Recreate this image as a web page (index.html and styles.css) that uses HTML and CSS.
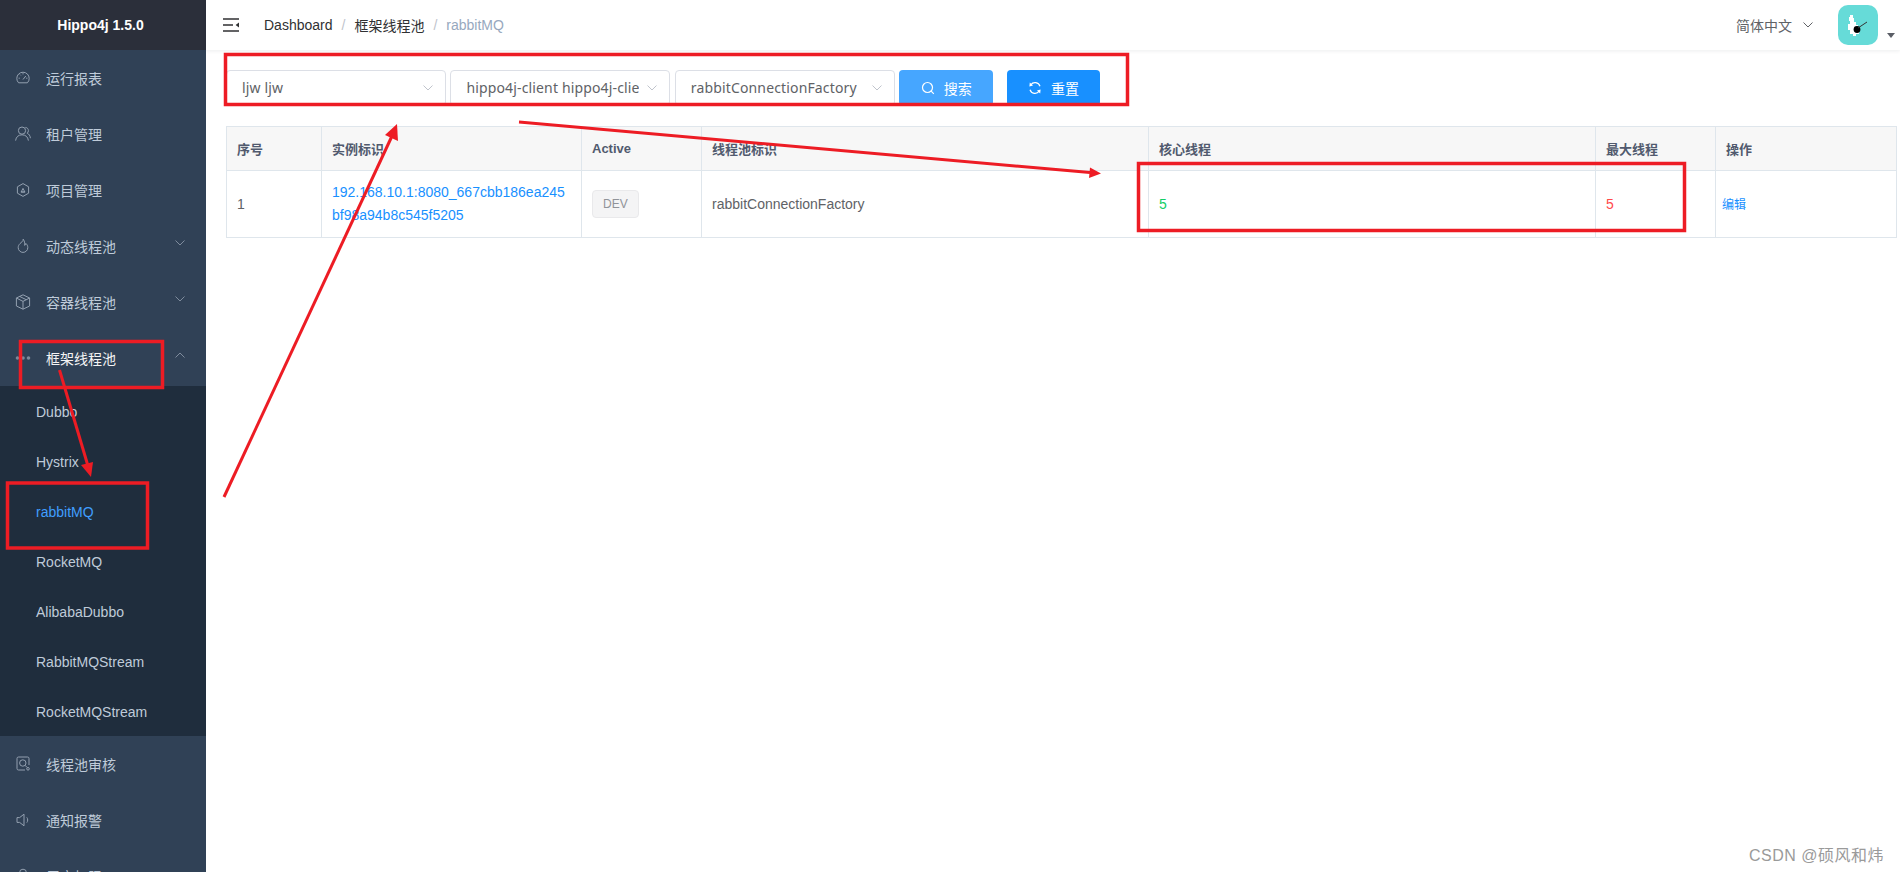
FILE: index.html
```html
<!DOCTYPE html>
<html>
  <head>
    <title>Hippo4j 1.5.0</title>
    <link rel="stylesheet" href="styles.css">
  </head>
  <body>
    <div class="app">
      <aside class="sidebar">
        <div class="logo">Hippo4j 1.5.0</div>
        <ul class="menu">
          <li class="menu-item">
            <svg class="menu-icon" viewBox="0 0 16 16"><path d="M3.6 12.8A6.2 6.2 0 1 1 12.4 12.8Z"/><path d="M8 9.5 10.8 6M3.6 8.2H4.8M5 4.6l.8.8M8 3.2v1.2M11.2 8.2h1.2"/></svg>
            <span>运行报表</span>
          </li>
          <li class="menu-item">
            <svg class="menu-icon" viewBox="0 0 16 16"><circle cx="7" cy="4.6" r="3.6"/><path d="M.6 14.6C1 10.8 3.6 8.8 7 8.8s6 2 6.4 5.8M10.4 1.4c2 .2 3 1.6 3 3.2 0 1-.4 2-1.2 2.6 1.8.8 3 2.6 3.2 5"/></svg>
            <span>租户管理</span>
          </li>
          <li class="menu-item">
            <svg class="menu-icon" viewBox="0 0 16 16"><path d="M8 1.6 13.6 4.8V11.2L8 14.4 2.4 11.2V4.8Z"/><path d="M6.2 10 8 6.4 9.8 10ZM5.8 10h4.4"/></svg>
            <span>项目管理</span>
          </li>
          <li class="menu-item">
            <svg class="menu-icon" viewBox="0 0 16 16"><path d="M8.2 1.2C8.4 3.4 6.4 4 5 5.6 3.8 6.9 3.2 8 3.2 9.6a4.8 4.8 0 0 0 9.6 0c0-1.8-.8-3.2-2-4.2-.1 1-.5 1.6-1.1 2C9.8 5.2 9.6 3 8.2 1.2Z"/></svg>
            <span>动态线程池</span>
            <svg class="menu-arrow" viewBox="0 0 10 6"><path d="M.5.5 5 5 9.500.5"/></svg>
          </li>
          <li class="menu-item">
            <svg class="menu-icon" viewBox="0 0 16 16"><path d="M8 .8 14.600 4V12L8 15.200 1.400 12V4Z"/><path d="M1.400 4 8 7.400 14.600 4M8 7.400V15.200M4.600 2.400 11.200 5.700"/></svg>
            <span>容器线程池</span>
            <svg class="menu-arrow" viewBox="0 0 10 6"><path d="M.5.5 5 5 9.500.5"/></svg>
          </li>
          <li class="menu-item open">
            <svg class="menu-icon" viewBox="0 0 16 16"><circle class="dot" cx="2.500" cy="8" r="1.800"/><circle class="dot" cx="8" cy="8" r="1.800"/><circle class="dot" cx="13.500" cy="8" r="1.800"/></svg>
            <span>框架线程池</span>
            <svg class="menu-arrow" viewBox="0 0 10 6"><path d="M.5 5.500 5 1 9.500 5.500"/></svg>
          </li>
          <li>
            <ul class="submenu">
              <li>Dubbo</li>
              <li>Hystrix</li>
              <li class="active">rabbitMQ</li>
              <li>RocketMQ</li>
              <li>AlibabaDubbo</li>
              <li>RabbitMQStream</li>
              <li>RocketMQStream</li>
            </ul>
          </li>
          <li class="menu-item">
            <svg class="menu-icon" viewBox="0 0 16 16"><path d="M10 14H3.500A1.500 1.500 0 0 1 2 12.500V2.500A1.500 1.500 0 0 1 3.500 1H12.500A1.500 1.500 0 0 1 14 2.500V9"/><circle cx="7.800" cy="7" r="3.200"/><path d="M10.200 9.400 12 11.400"/><circle cx="13" cy="12.800" r="1.300"/></svg>
            <span>线程池审核</span>
          </li>
          <li class="menu-item">
            <svg class="menu-icon" viewBox="0 0 16 16"><path d="M2 5.600V10.400H4.600L9 13.800V2.200L4.600 5.600ZM11.800 5.400c1.200 1.400 1.200 3.800 0 5.200"/></svg>
            <span>通知报警</span>
          </li>
          <li class="menu-item">
            <svg class="menu-icon" viewBox="0 0 16 16"><circle cx="8" cy="4.600" r="3.400"/><path d="M2 14.600C2.400 11 4.800 9 8 9s5.600 2 6 5.600"/></svg>
            <span>用户权限</span>
          </li>
        </ul>
      </aside>

      <div class="main">
        <header class="navbar">
          <svg class="hamburger" viewBox="0 0 16 14"><path d="M0 1H16M0 7H10M0 13H16"/><path class="fill" d="M16 4.400V9.600L12.600 7Z"/></svg>
          <div class="breadcrumb">
            <span>Dashboard</span>
            <i>/</i>
            <span>框架线程池</span>
            <i>/</i>
            <span class="current">rabbitMQ</span>
          </div>
          <div class="nav-right">
            <div class="lang">
              <span>简体中文</span>
              <svg class="lang-arrow" viewBox="0 0 10 6"><path d="M.5.5 5 5 9.500.5"/></svg>
            </div>
            <div class="avatar">
              <svg viewBox="0 0 40 40"><path class="bird" d="M12 10H15V13H16V17H18V20H20V26H21V29H18V31H15V29H12V25H10V19H12V16H11V12H12Z"/><circle cx="19" cy="24.500" r="3.400"/><path class="stick" d="M20 23 29 17"/></svg>
            </div>
            <span class="caret"></span>
          </div>
        </header>

        <section class="content">
          <div class="filters">
            <div class="select"><span class="select-text">ljw ljw</span><svg viewBox="0 0 10 6"><path d="M.5.5 5 5 9.500.5"/></svg></div>
            <div class="select"><span class="select-text">hippo4j-client hippo4j-client</span><svg viewBox="0 0 10 6"><path d="M.5.5 5 5 9.500.5"/></svg></div>
            <div class="select"><span class="select-text">rabbitConnectionFactory</span><svg viewBox="0 0 10 6"><path d="M.5.5 5 5 9.500.5"/></svg></div>
            <button class="btn btn-search">
              <svg viewBox="0 0 14 14"><circle cx="6.500" cy="6.500" r="5"/><path d="M10.200 10.200 12.800 12.800"/></svg>
              <span>搜索</span>
            </button>
            <button class="btn btn-reset">
              <svg viewBox="0 0 14 14"><path d="M12 5.200A5.200 5.200 0 0 0 2.800 3.800M2 8.800A5.200 5.200 0 0 0 11.200 10.200"/><path class="fill" d="M1.800 1.600 5 4.600 1.400 5.400ZM12.200 12.400 9 9.400 12.600 8.600Z"/></svg>
              <span>重置</span>
            </button>
          </div>

          <table class="pool-table">
            <colgroup>
              <col class="col-no">
              <col class="col-instance">
              <col class="col-active">
              <col class="col-pool">
              <col class="col-core">
              <col class="col-max">
              <col class="col-op">
            </colgroup>
            <thead>
              <tr>
                <th>序号</th>
                <th>实例标识</th>
                <th>Active</th>
                <th>线程池标识</th>
                <th>核心线程</th>
                <th>最大线程</th>
                <th>操作</th>
              </tr>
            </thead>
            <tbody>
              <tr>
                <td>1</td>
                <td class="link">192.168.10.1:8080_667cbb186ea245<br>bf98a94b8c545f5205</td>
                <td><span class="tag">DEV</span></td>
                <td>rabbitConnectionFactory</td>
                <td class="green">5</td>
                <td class="red">5</td>
                <td class="op">编辑</td>
              </tr>
            </tbody>
          </table>
        </section>
      </div>
    </div>

    <!-- red annotations drawn over the screenshot -->
    <svg class="marks" viewBox="0 0 1900 872">
      <rect x="225.500" y="54.500" width="902" height="50"/>
      <rect x="1138.500" y="163.500" width="546" height="67"/>
      <rect x="20.500" y="341.500" width="142" height="46"/>
      <rect x="7.500" y="483" width="140" height="65"/>
      <line x1="59.500" y1="370" x2="88" y2="466"/>
      <polygon points="91,477 81,465 93,462"/>
      <line x1="224" y1="497" x2="392" y2="136"/>
      <polygon points="397,124 398,141 385,135"/>
      <line x1="519" y1="122" x2="1090" y2="172.500"/>
      <polygon points="1101,173.500 1089,178 1090,167.500"/>
    </svg>

    <div class="watermark">CSDN @硕风和炜</div>
  </body>
</html>
```

FILE: styles.css
```css
* {
  box-sizing: border-box;
}
html,
body {
  margin: 0;
  height: 100%;
  overflow: hidden;
}
body {
  position: relative;
  font-family: "Liberation Sans", "Noto Sans CJK SC", sans-serif;
  font-size: 14px;
  color: #606266;
  background: #fff;
}
ul {
  list-style: none;
  margin: 0;
  padding: 0;
}
svg {
  display: block;
  fill: none;
  stroke: currentColor;
}
.app {
  display: flex;
  height: 872px;
}

/* sidebar */
.sidebar {
  width: 206px;
  flex-shrink: 0;
  background: #304156;
  overflow: hidden;
}
.logo {
  height: 50px;
  line-height: 50px;
  padding-right: 5px;
  text-align: center;
  font-weight: bold;
  color: #fff;
  background: #2b2f3a;
}
.menu-item {
  display: flex;
  align-items: center;
  height: 56px;
  padding-left: 15px;
  color: #bfcbd9;
}
.menu-item.open {
  color: #f4f4f5;
}
.menu-icon {
  width: 16px;
  height: 16px;
  margin-right: 15px;
  color: #93a0b0;
  stroke-width: 1;
}
.menu-icon .dot {
  fill: #7d8a9b;
  stroke: none;
}
.menu-arrow {
  width: 10px;
  height: 6px;
  margin-left: auto;
  margin-right: 21px;
  margin-top: -6px;
  color: #7f8c9d;
}
.submenu {
  background: #1f2d3d;
}
.submenu li {
  height: 50px;
  line-height: 52px;
  padding-left: 36px;
  color: #bfcbd9;
}
.submenu li.active {
  color: #409eff;
}

/* top bar */
.main {
  flex: 1;
  min-width: 0;
}
.navbar {
  display: flex;
  align-items: center;
  height: 50px;
  padding-left: 17px;
  box-shadow: 0 1px 4px rgba(0, 21, 41, 0.08);
}
.hamburger {
  width: 16px;
  height: 14px;
  color: #303133;
  stroke-width: 1.4;
}
.hamburger .fill,
.btn .fill {
  fill: currentColor;
  stroke: none;
}
.breadcrumb {
  display: flex;
  align-items: center;
  margin-left: 25px;
  color: #303133;
}
.breadcrumb i {
  margin: 0 9px;
  font-style: normal;
  color: #c0c4cc;
}
.breadcrumb .current {
  color: #97a8be;
}
.nav-right {
  display: flex;
  align-items: center;
  margin-left: auto;
  height: 50px;
}
.lang {
  display: flex;
  align-items: center;
  margin-right: 25px;
}
.lang-arrow {
  width: 10px;
  height: 6px;
  margin-left: 11px;
  color: #606266;
}
.avatar {
  width: 40px;
  height: 40px;
  border-radius: 10px;
  background: #66dbd8;
  color: #000;
}
.avatar circle {
  fill: #000;
  stroke: none;
}
.avatar .bird {
  fill: #fff;
  stroke: none;
}
.avatar .stick {
  stroke: #333;
  stroke-width: 1;
}
.caret {
  width: 0;
  height: 0;
  margin: 20px 5px 0 9px;
  border-left: 4px solid transparent;
  border-right: 4px solid transparent;
  border-top: 5px solid #5a5e66;
}

/* filters */
.content {
  padding: 20px 4px 0 20px;
}
.filters {
  display: flex;
  align-items: center;
  gap: 4.4px;
}
.select {
  display: flex;
  align-items: center;
  width: 220px;
  height: 36px;
  padding: 0 12px 0 15px;
  border: 1px solid #dcdfe6;
  border-radius: 4px;
  font-family: "Noto Sans", sans-serif;
  letter-spacing: 0.15px;
}
.select-text {
  flex: 1;
  min-width: 0;
  margin: 0 8px 2px 0;
  white-space: nowrap;
  overflow: hidden;
}
.select svg {
  width: 10px;
  height: 6px;
  flex-shrink: 0;
  color: #c0c4cc;
}
.btn {
  display: flex;
  align-items: center;
  justify-content: center;
  gap: 9px;
  width: 94px;
  height: 36px;
  padding: 0;
  border: none;
  border-radius: 4px;
  font-family: inherit;
  font-size: 14px;
  color: #fff;
}
.btn svg {
  width: 14px;
  height: 14px;
  stroke-width: 1.2;
}
.btn-search {
  background: #46a6ff;
}
.btn-reset {
  width: 93px;
  margin-left: 9.500px;
  background: #1890ff;
}

/* table */
.pool-table {
  width: 1670px;
  margin-top: 20px;
  table-layout: fixed;
  border-collapse: collapse;
  font-size: 14px;
  color: #606266;
}
.col-no {
  width: 95px;
}
.col-instance {
  width: 260px;
}
.col-active {
  width: 120px;
}
.col-pool {
  width: 447px;
}
.col-core {
  width: 447px;
}
.col-max {
  width: 120px;
}
.col-op {
  width: 181px;
}
.pool-table th,
.pool-table td {
  padding: 0 10px;
  border: 1px solid #dfe6ec;
  text-align: left;
}
.pool-table th {
  height: 44px;
  background: #f7f7f7;
  color: #515a6e;
  font-size: 13px;
  font-weight: bold;
}
.pool-table td {
  height: 67px;
  line-height: 23px;
}
.pool-table .link,
.pool-table .op {
  color: #1890ff;
}
.pool-table .op {
  padding: 2px 0 0 6px;
  font-size: 12px;
}
.pool-table .green {
  color: #13ce66;
}
.pool-table .red {
  color: #ff4949;
}
.tag {
  display: inline-block;
  height: 28px;
  line-height: 26px;
  padding: 0 10px;
  border: 1px solid #e9e9eb;
  border-radius: 4px;
  background: #f4f4f5;
  color: #909399;
  font-size: 12px;
}

/* annotations */
.marks {
  position: absolute;
  left: 0;
  top: 0;
  width: 1900px;
  height: 872px;
  pointer-events: none;
  stroke: #ed1c24;
}
.marks rect {
  stroke-width: 3.500px;
}
.marks line {
  stroke-width: 3px;
}
.marks polygon {
  fill: #ed1c24;
  stroke: none;
}
.watermark {
  position: absolute;
  right: 16px;
  bottom: 6px;
  font-size: 16px;
  letter-spacing: 0.5px;
  color: #9a9a9a;
}
```
